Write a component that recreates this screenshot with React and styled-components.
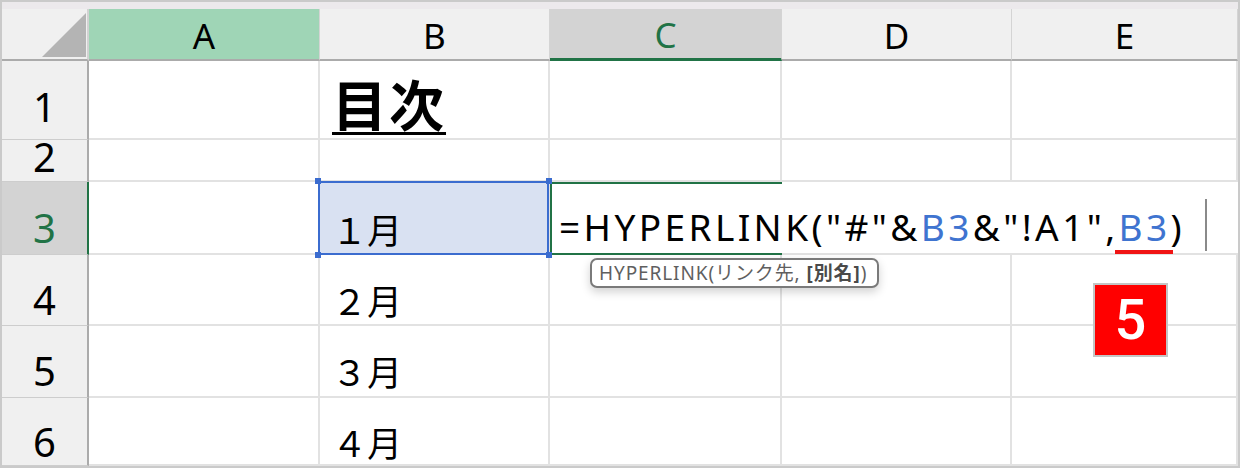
import styled, { createGlobalStyle } from "styled-components";

const GlobalStyle = createGlobalStyle`
    body {
        margin: 0;
        background: #ffffff;
    }
`;

const GRID = "#e2e2e2";
const HEAD_LINE = "#ababab";
const EXCEL_GREEN = "#217346";
const SEL_BLUE = "#3b6ccf";
const JP = `"Noto Sans CJK JP", "Noto Sans", sans-serif`;
const LATIN_JP = `"Noto Sans", "Noto Sans CJK JP", sans-serif`;

const Frame = styled.div`
    width: 1240px;
    height: 468px;
    box-sizing: border-box;
    border: 2px solid #cacaca;
    display: flex;
    flex-direction: column;
    position: relative;
    background: #ffffff;
    overflow: hidden;
`;

const TopStrip = styled.div`
    height: 7px;
    background: #ece9ec;
    flex-shrink: 0;
`;

const Sheet = styled.div`
    flex: 1;
    display: grid;
    grid-template-columns: 87px 231px 230px 232px 230px 1fr;
    grid-template-rows: 52px 79px 42px 73px 71px 72px 1fr;
`;

const Corner = styled.div`
    box-sizing: border-box;
    background: #f0f0f0;
    border-right: 2px solid #d2d2d2;
    border-bottom: 2px solid ${HEAD_LINE};
    display: flex;
    align-items: flex-end;
    justify-content: flex-end;
    padding: 0 1px 2px 0;
`;

const ColHeader = styled.div`
    box-sizing: border-box;
    background: ${(p) => (p.$active ? "#d3d3d3" : p.$selected ? "#9fd5b6" : "#f0f0f0")};
    color: ${(p) => (p.$active ? EXCEL_GREEN : "#000000")};
    border-right: 1px solid #d4d4d4;
    border-bottom: ${(p) => (p.$active ? `3px solid ${EXCEL_GREEN}` : `2px solid ${HEAD_LINE}`)};
    display: flex;
    align-items: center;
    justify-content: center;
    font-family: "Noto Sans", sans-serif;
    font-size: 35px;
    line-height: 1;
    padding-top: 2px;
`;

const RowHeader = styled.div`
    box-sizing: border-box;
    background: ${(p) => (p.$active ? "#d3d3d3" : "#f0f0f0")};
    color: ${(p) => (p.$active ? EXCEL_GREEN : "#000000")};
    border-right: 2px solid ${(p) => (p.$active ? EXCEL_GREEN : HEAD_LINE)};
    border-bottom: 1px solid #cdcdcd;
    display: flex;
    align-items: flex-end;
    justify-content: center;
    font-family: "Noto Sans", sans-serif;
    font-size: 40px;
    line-height: 32px;
    padding-bottom: ${(p) => p.$pad}px;
`;

const Cell = styled.div`
    box-sizing: border-box;
    position: relative;
    background: ${(p) => (p.$selected ? "#d9e1f2" : "#ffffff")};
    border-right: 2px solid ${GRID};
    border-bottom: 2px solid ${GRID};
    display: flex;
    align-items: flex-end;
    padding: 0 0 ${(p) => p.$pad || 0}px 12px;
    font-family: ${JP};
    font-size: 35px;
    line-height: 1;
    color: #000000;

    ${(p) =>
        p.$selected &&
        `
        &::after {
            content: "";
            position: absolute;
            top: -1px;
            left: -2px;
            right: -1px;
            bottom: -2px;
            border: 2px solid ${SEL_BLUE};
            pointer-events: none;
        }
    `}
`;

const Title = styled.span`
    font-size: 55px;
    font-weight: 700;
    text-decoration: underline;
    text-decoration-thickness: 3px;
    text-underline-offset: 6px;
    letter-spacing: 2px;
`;

const Handle = styled.span`
    position: absolute;
    width: 6px;
    height: 6px;
    background: ${SEL_BLUE};
    z-index: 3;
    ${(p) => (p.$top ? "top: -4px;" : "bottom: -5px;")}
    ${(p) => (p.$left ? "left: -5px;" : "right: -4px;")}
`;

const EditCell = styled.div`
    box-sizing: border-box;
    grid-column: span 3;
    position: relative;
    background: #ffffff;
    border-bottom: 2px solid ${GRID};
    display: flex;
    align-items: flex-end;
    padding: 0 0 8px 9px;
    font-family: ${LATIN_JP};
    font-size: 37px;
    letter-spacing: 3.4px;
    line-height: 1;
    white-space: nowrap;
    z-index: 2;

    &::before {
        content: "";
        position: absolute;
        top: 0;
        left: 0;
        width: 232px;
        bottom: -2px;
        box-sizing: border-box;
        border: 2px solid ${EXCEL_GREEN};
        border-right: none;
        pointer-events: none;
    }
`;

const Ref = styled.span`
    color: #3f74d0;
    position: relative;

    ${(p) =>
        p.$marked &&
        `
        &::after {
            content: "";
            position: absolute;
            left: -4px;
            right: -2px;
            bottom: -9px;
            height: 4px;
            background: #f01414;
        }
    `}
`;

const Caret = styled.span`
    display: inline-block;
    width: 2px;
    height: 52px;
    background: #8a8a8a;
    margin: 0 0 -6px 20px;
`;

const Tooltip = styled.div`
    position: absolute;
    left: 40px;
    top: 76px;
    width: 289px;
    height: 30px;
    box-sizing: border-box;
    border: 2px solid #7a7a7a;
    border-radius: 7px;
    background: #ffffff;
    box-shadow: 0 4px 10px rgba(0, 0, 0, 0.18);
    display: flex;
    align-items: center;
    padding-left: 7px;
    font-family: ${LATIN_JP};
    font-size: 19px;
    letter-spacing: 0.9px;
    color: #5f5f5f;
    white-space: nowrap;

    b {
        color: #4a4a4a;
        font-weight: 700;
    }
`;

const StepBadge = styled.div`
    position: absolute;
    left: 1091px;
    top: 281px;
    width: 75px;
    height: 74px;
    box-sizing: border-box;
    border: 2px solid #c4c4c4;
    background: #ff0000;
    color: #ffffff;
    display: flex;
    align-items: center;
    justify-content: center;
    font-family: Roboto, "Noto Sans", sans-serif;
    font-weight: 500;
    font-size: 56px;
    line-height: 1;
    z-index: 4;
`;

const columns = ["A", "B", "C", "D", "E"];

const rows = [
    { n: 1, pad: 16 },
    { n: 2, pad: 8 },
    { n: 3, pad: 10, active: true },
    { n: 4, pad: 9 },
    { n: 5, pad: 10 },
    { n: 6, pad: 7 },
];

function EmptyCells({ count }) {
    return Array.from({ length: count }).map((_, i) => <Cell key={i} />);
}

function RowGroup({ row, month }) {
    return (
        <>
            <RowHeader $pad={row.pad}>{row.n}</RowHeader>
            <Cell />
            <Cell $pad={row.pad - 2}>{month}</Cell>
            <EmptyCells count={3} />
        </>
    );
}

export default function App() {
    return (
        <>
            <GlobalStyle />
            <Frame>
                <TopStrip />
                <Sheet>
                    <Corner>
                        <svg width="44" height="44" viewBox="0 0 44 44">
                            <polygon points="44,0 44,44 0,44" fill="#b4b4b4" />
                        </svg>
                    </Corner>
                    {columns.map((c) => (
                        <ColHeader key={c} $selected={c === "A"} $active={c === "C"}>
                            {c}
                        </ColHeader>
                    ))}

                    {/* row 1 */}
                    <RowHeader $pad={rows[0].pad}>1</RowHeader>
                    <Cell />
                    <Cell $pad={8}>
                        <Title>目次</Title>
                    </Cell>
                    <EmptyCells count={3} />

                    {/* row 2 */}
                    <RowHeader $pad={rows[1].pad}>2</RowHeader>
                    <EmptyCells count={5} />

                    {/* row 3 */}
                    <RowHeader $pad={rows[2].pad} $active>
                        3
                    </RowHeader>
                    <Cell />
                    <Cell $selected $pad={7}>
                        １月
                        <Handle $top $left />
                        <Handle $left />
                        <Handle $top />
                        <Handle />
                    </Cell>
                    <EditCell>
                        =HYPERLINK("#"&amp;<Ref>B3</Ref>&amp;"!A1",<Ref $marked>B3</Ref>)
                        <Caret />
                        <Tooltip>
                            HYPERLINK(リンク先,&nbsp;<b>[別名]</b>)
                        </Tooltip>
                    </EditCell>

                    {/* rows 4-6 */}
                    {["２月", "３月", "４月"].map((m, i) => (
                        <RowGroup key={m} row={rows[i + 3]} month={m} />
                    ))}
                </Sheet>
                <StepBadge>5</StepBadge>
            </Frame>
        </>
    );
}
